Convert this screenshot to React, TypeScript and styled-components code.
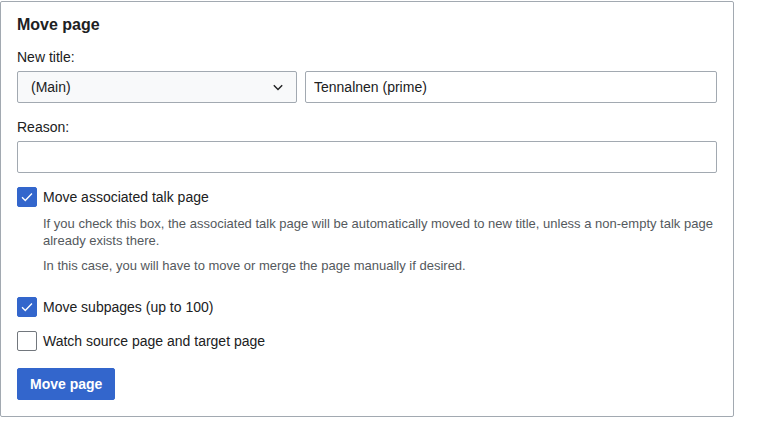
import React from 'react';
import styled, { createGlobalStyle } from 'styled-components';

const GlobalStyle = createGlobalStyle`
  html, body {
    margin: 0;
    padding: 0;
    background: #fff;
    font-family: "Liberation Sans", Arial, sans-serif;
    color: #202122;
  }
  * {
    box-sizing: border-box;
  }
`;

function Checkbox({ checked, label }: { checked: boolean; label: string }) {
  return (
    <CheckRow>
      <CheckBox checked={checked}>
        {checked && (
          <svg width="18" height="18" viewBox="0 0 20 20">
            <path d="M4.5 10.2l3.6 3.6 7.4-7.6" fill="none" stroke="#fff" strokeWidth="1.5" />
          </svg>
        )}
      </CheckBox>
      <CheckLabel>{label}</CheckLabel>
    </CheckRow>
  );
}

function App() {
  return (
    <>
      <GlobalStyle />
      <Panel>
        <Title>Move page</Title>
        <Label>New title:</Label>
        <TitleRow>
          <Select>
            <span>(Main)</span>
            <svg width="12" height="12" viewBox="0 0 20 20">
              <path d="M3 7l7 7 7-7" fill="none" stroke="#202122" strokeWidth="2.4" />
            </svg>
          </Select>
          <TextInput grow defaultValue="Tennalnen (prime)" />
        </TitleRow>
        <Label>Reason:</Label>
        <TextInput defaultValue="" />
        <Options>
          <HelpGroup>
            <Checkbox checked label="Move associated talk page" />
            <Help>
              If you check this box, the associated talk page will be automatically moved to new title, unless a
              non-empty talk page already exists there.
            </Help>
            <Help>In this case, you will have to move or merge the page manually if desired.</Help>
          </HelpGroup>
          <Checkbox checked label="Move subpages (up to 100)" />
          <Checkbox checked={false} label="Watch source page and target page" />
        </Options>
        <SubmitButton>Move page</SubmitButton>
      </Panel>
    </>
  );
}

const Panel = styled.div`
  margin-top: 1px;
  width: 734px;
  border: 1px solid #a2a9b1;
  border-radius: 2px;
  padding: 12px 16px 16px;
  display: flex;
  flex-direction: column;
`;

const Title = styled.h2`
  margin: 0 0 11px;
  font-size: 16px;
  font-weight: bold;
  line-height: 22px;
`;

const Label = styled.div`
  font-size: 14px;
  line-height: 20px;
  margin-bottom: 4px;
`;

const TitleRow = styled.div`
  display: flex;
  gap: 8px;
  margin-bottom: 14px;
`;

const Select = styled.div`
  width: 280px;
  height: 32px;
  flex-shrink: 0;
  display: flex;
  align-items: center;
  justify-content: space-between;
  padding: 0 12px 0 13px;
  background: #f8f9fa;
  border: 1px solid #a2a9b1;
  border-radius: 2px;
  font-size: 14px;
`;

const TextInput = styled.input<{ grow?: boolean }>`
  flex: ${(p) => (p.grow ? '1 1 auto' : '0 0 auto')};
  width: ${(p) => (p.grow ? 'auto' : '100%')};
  min-width: 0;
  height: 32px;
  border: 1px solid #a2a9b1;
  border-radius: 2px;
  padding: 0 8px;
  font-family: inherit;
  font-size: 14px;
  color: #202122;
  outline: none;
`;

const Options = styled.div`
  display: flex;
  flex-direction: column;
  gap: 14px;
  margin-top: 14px;
`;

const HelpGroup = styled.div`
  margin-bottom: 9px;
`;

const CheckRow = styled.label`
  display: flex;
  align-items: center;
  gap: 6px;
`;

const CheckBox = styled.span<{ checked: boolean }>`
  width: 20px;
  height: 20px;
  flex-shrink: 0;
  display: flex;
  align-items: center;
  justify-content: center;
  border-radius: 2px;
  border: 1px solid ${(p) => (p.checked ? '#36c' : '#72777d')};
  background: ${(p) => (p.checked ? '#36c' : '#fff')};
`;

const CheckLabel = styled.span`
  font-size: 14px;
  line-height: 20px;
`;

const Help = styled.p`
  margin: 8px 0 0 26px;
  font-size: 13px;
  line-height: 17px;
  color: #54595d;
`;

const SubmitButton = styled.button`
  align-self: flex-start;
  margin-top: 17px;
  height: 32px;
  padding: 0 12px;
  background: #36c;
  color: #fff;
  border: 1px solid #36c;
  border-radius: 2px;
  font-family: inherit;
  font-size: 14px;
  font-weight: bold;
`;

export default App;
